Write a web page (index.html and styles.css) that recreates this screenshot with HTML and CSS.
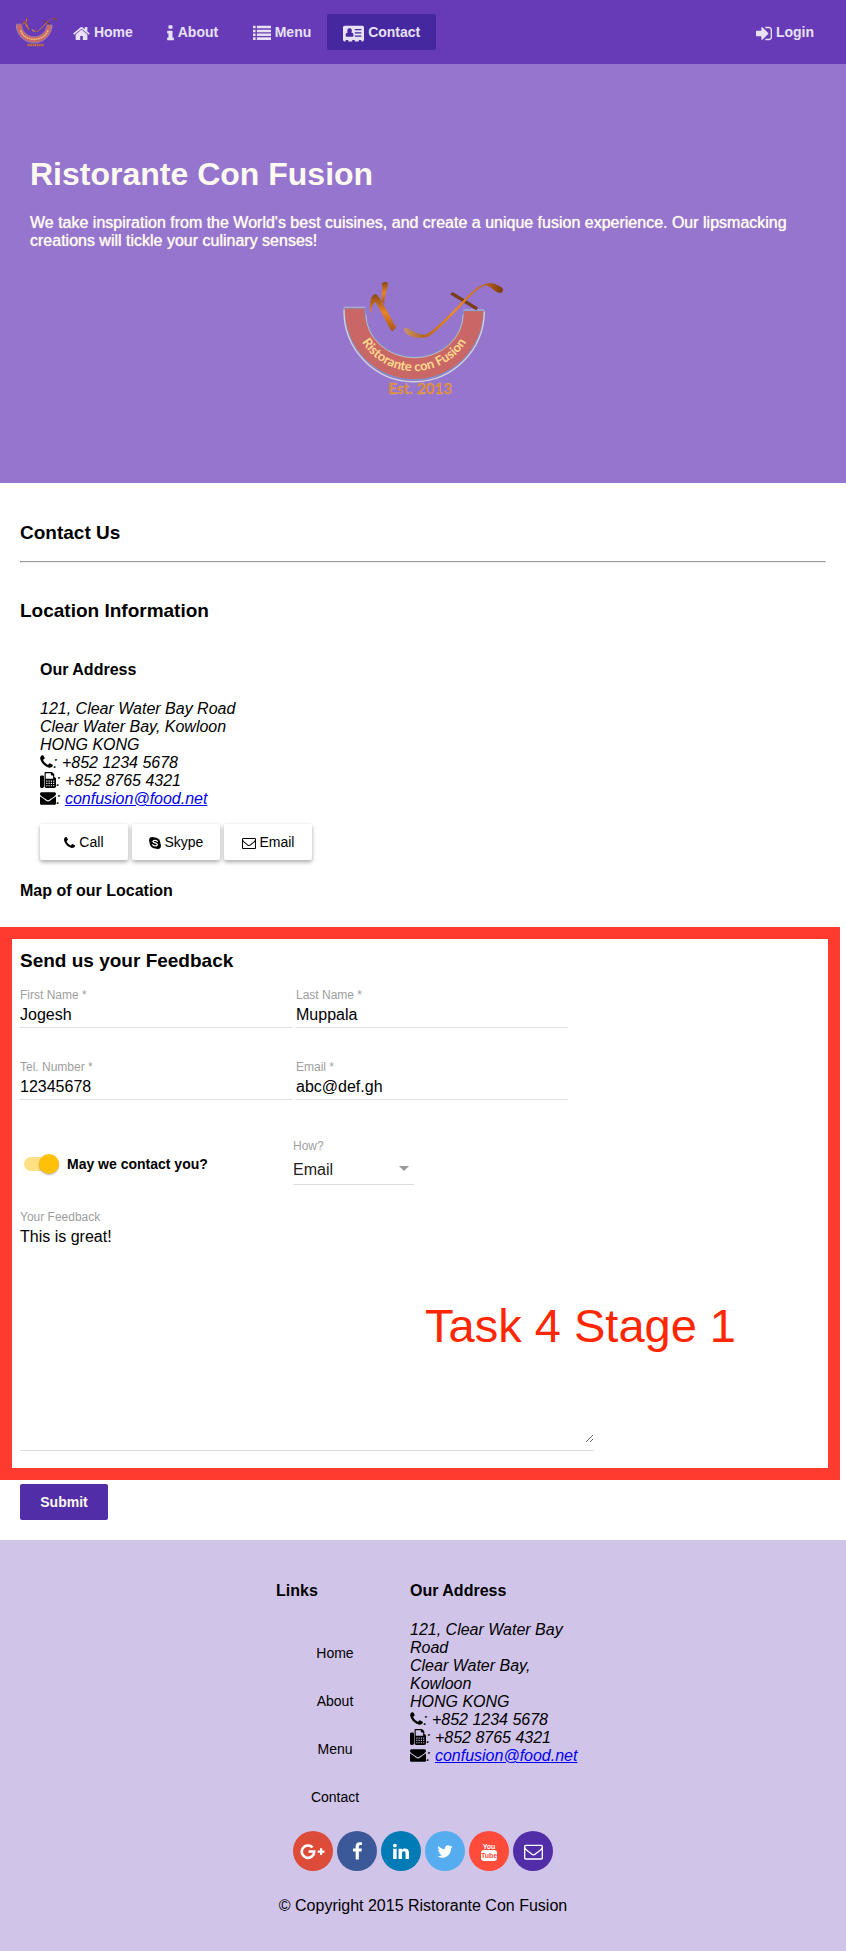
FILE: index.html
```html
<!DOCTYPE html>
<html lang="en">
<head>
<meta charset="utf-8">
<meta name="viewport" content="width=device-width, initial-scale=1">
<title>Ristorante Con Fusion: Contact Us</title>
<link rel="stylesheet" href="styles.css">
</head>
<body>
<svg class="sprite" aria-hidden="true">
  <defs>
    <linearGradient id="wood" x1="0" y1="0" x2="1" y2="0">
      <stop offset="0" stop-color="#c9976c"/><stop offset=".2" stop-color="#b5651d"/><stop offset=".5" stop-color="#ee8a2a"/><stop offset=".8" stop-color="#c4681a"/><stop offset="1" stop-color="#7a3c08"/>
    </linearGradient>
    <linearGradient id="wood-dark" x1="0" y1="0" x2="0" y2="1">
      <stop offset="0" stop-color="#8a4a10"/><stop offset=".5" stop-color="#e8842a"/><stop offset="1" stop-color="#a85512"/>
    </linearGradient>
    <path id="logo-arc" d="M95 150A185 185 0 0 0 465 150" fill="none"/>
    <g id="logo-art">
      <path d="M70 145A209 211 0 0 0 490 153H429A147 143 0 0 1 132 145Z" fill="#c96767" stroke="#6d9bd0" stroke-width="3"/>
      <path d="M69 150A210 213 0 0 0 491 156" fill="none" stroke="#d3d3dc" stroke-width="4"/>
      <path d="M68 143H133M428 151H490M135 165A146 130 0 0 0 427 165" fill="none" stroke="#d3d3dc" stroke-width="2"/>
      <path d="M147 158C145 130 150 103 164 103C178 110 200 160 226 203L214 216C198 196 180 150 163 127C155 132 151 146 150 158Z" fill="url(#wood-dark)"/>
      <path d="M183 70Q192 64 201 70C201 85 192 103 190 134L182 124C181 105 186 88 183 70Z" fill="url(#wood-dark)"/>
      <path d="M390 104L396 99L470 144L467 151Z" fill="#7d4010" stroke="#6a3408" stroke-width="2"/>
      <path d="M249 208Q254 203 263 208C276 216 292 226 312 226C340 216 390 160 440 110C465 84 490 68 512 71C526 73 538 80 546 86Q549 96 541 100C522 102 512 78 494 78C475 82 452 106 432 128C390 172 350 214 325 230C298 240 252 236 249 208Z" fill="url(#wood)"/>
    </g>
  </defs>
  <symbol id="home" viewBox="64 0 1664 1792"><path d="M1472 992v480q0 26-19 45t-45 19h-384v-384h-256v384h-384q-26 0-45-19t-19-45v-480q0-1 .5-3t.5-3l575-474 575 474q1 2 1 6zm223-69l-62 74q-8 9-21 11h-3q-13 0-21-7l-692-577-692 577q-12 8-24 7-13-2-21-11l-62-74q-8-10-7-23.5t11-21.5l719-599q32-26 76-26t76 26l244 204v-195q0-14 9-23t23-9h192q14 0 23 9t9 23v408l219 182q10 8 11 21.5t-7 23.5z"/></symbol>
  <symbol id="info" viewBox="576 0 640 1792"><path d="M1216 1344v128q0 26-19 45t-45 19h-512q-26 0-45-19t-19-45v-128q0-26 19-45t45-19h64v-384h-64q-26 0-45-19t-19-45v-128q0-26 19-45t45-19h384q26 0 45 19t19 45v576h64q26 0 45 19t19 45zm-128-1152v192q0 26-19 45t-45 19h-256q-26 0-45-19t-19-45v-192q0-26 19-45t45-19h256q26 0 45 19t19 45z"/></symbol>
  <symbol id="list" viewBox="0 0 1792 1792"><path d="M0 128h256v256H0zM0 512h256v256H0zM0 896h256v256H0zM0 1280h256v256H0zM384 128h1408v256H384zM384 512h1408v256H384zM384 896h1408v256H384zM384 1280h1408v256H384z"/></symbol>
  <symbol id="card" viewBox="0 0 2048 1792"><path fill-rule="evenodd" d="M160 128H1888Q2048 128 2048 288V1504Q2048 1664 1888 1664H1792V1568Q1792 1536 1760 1536H1568Q1536 1536 1536 1568V1664H1152V1568Q1152 1536 1120 1536H928Q896 1536 896 1568V1664H512V1568Q512 1536 480 1536H288Q256 1536 256 1568V1664H160Q0 1664 0 1504V288Q0 128 160 128ZM640 384A215 235 0 0 0 480 790Q256 800 256 1090Q256 1216 370 1216H910Q1024 1216 1024 1090Q1024 800 800 790A215 235 0 0 0 640 384ZM1152 448V576H1792V448ZM1152 768V896H1792V768ZM1152 1088V1216H1792V1088Z"/></symbol>
  <symbol id="login" viewBox="128 0 1536 1792"><path d="M1312 896q0 26-19 45l-544 544q-19 19-45 19t-45-19-19-45v-288h-448q-26 0-45-19t-19-45v-384q0-26 19-45t45-19h448v-288q0-26 19-45t45-19 45 19l544 544q19 19 19 45zm352-352v704q0 119-84.5 203.5t-203.5 84.5h-320q-13 0-22.5-9.5t-9.5-22.5q0-4-1-20t-.5-26.5 3-23.5 10-19.5 20.5-6.5h320q66 0 113-47t47-113v-704q0-66-47-113t-113-47h-312l-11.5-1-11.5-3-8-5.5-7-9-2-13.5q0-4-1-20t-.5-26.5 3-23.5 10-19.5 20.5-6.5h320q119 0 203.5 84.5t84.5 203.5z"/></symbol>
  <symbol id="phone" viewBox="192 0 1408 1792"><path d="M1600 1240q0 27-10 70.5t-21 68.5q-21 50-122 106-94 51-186 51-27 0-52.5-3.5t-57.5-12.5-47.5-14.5-55.5-20.5-49-18q-98-35-175-83-128-79-264.5-215.5t-215.5-264.5q-48-77-83-175-3-9-18-49t-20.5-55.5-14.5-47.5-12.5-57.5-3.5-52.5q0-92 51-186 56-101 106-122 25-11 68.5-21t70.5-10q14 0 21 3 18 6 53 76 11 19 30 54t35 63.5 31 53.5q3 4 17.5 25t21.5 35.5 7 28.5q0 20-28.5 50t-62 55-62 53-28.5 46q0 9 5 22.5t8.5 20.5 14 24 11.5 19q76 137 174 235t235 174q2 1 19 11.5t24 14 20.5 8.5 22.5 5q18 0 46-28.5t53-62 55-62 50-28.5q14 0 28.5 7t35.5 21.5 25 17.5q25 15 53.5 31t63.5 35 54 30q70 35 76 53 3 7 3 21z"/></symbol>
  <symbol id="fax" viewBox="0 0 1792 1792"><path fill-rule="evenodd" d="M160 384H288Q448 384 448 544V1632Q448 1792 288 1792H160Q0 1792 0 1632V544Q0 384 160 384ZM512 96Q512 0 608 0H1280Q1350 0 1400 50L1552 202Q1600 250 1600 320V560Q1792 620 1792 760V1600Q1792 1792 1600 1792H704Q512 1792 512 1600ZM640 128V768H1472V384H1312Q1216 384 1216 288V128ZM704 960V1088H832V960ZM960 960V1088H1088V960ZM1216 960V1088H1344V960ZM704 1216V1344H832V1216ZM960 1216V1344H1088V1216ZM1216 1216V1344H1344V1216ZM704 1472V1600H832V1472ZM960 1472V1600H1088V1472ZM1216 1472V1600H1344V1472ZM1472 960V1088H1600V960ZM1472 1216V1344H1600V1216ZM1472 1472V1600H1600V1472Z"/></symbol>
  <symbol id="envelope" viewBox="0 0 1792 1792"><path d="M1792 710v794q0 66-47 113t-113 47h-1472q-66 0-113-47t-47-113v-794q44 49 101 87 362 246 497 345 57 42 92.5 65.5t94.5 48 110 24.5h2q51 0 110-24.5t94.5-48 92.5-65.5q170-123 498-345 57-39 100-87zm0-294q0 79-49 151t-122 123q-376 261-468 325-10 7-42.5 31t-54 38.5-52 32.5-57.5 27-50 9h-2q-23 0-50-9t-57.5-27-52-32.5-54-38.5-42.5-31q-91-64-262-182.5t-205-142.5q-62-42-117-115.5t-55-136.5q0-78 41.5-130t118.5-52h1472q65 0 112.5 47t47.5 113z"/></symbol>
  <symbol id="envelope-o" viewBox="0 0 1792 1792"><path d="M1664 1504v-768q-32 36-69 66-268 206-426 338-51 43-83 67t-86.5 48.5-102.5 24.5h-2q-48 0-102.5-24.5t-86.5-48.5-83-67q-158-132-426-338-37-30-69-66v768q0 13 9.5 22.5t22.5 9.5h1472q13 0 22.5-9.5t9.5-22.5zm0-1051v-24.5l-.5-13-3-12.5-5.5-9-9-7.5-14-2.5h-1472q-13 0-22.5 9.5t-9.5 22.5q0 168 147 284 193 152 401 317 6 5 35 29.5t46 37.5 44.5 31.5 50.5 27.5 43 9h2q20 0 43-9t50.5-27.5 44.5-31.5 46-37.5 35-29.5q208-165 401-317 54-43 100.5-115.5t46.5-131.5zm128-37v1088q0 66-47 113t-113 47h-1472q-66 0-113-47t-47-113v-1088q0-66 47-113t113-47h1472q66 0 113 47t47 113z"/></symbol>
  <symbol id="skype" viewBox="0 0 12 14"><circle cx="6" cy="7" r="5.4"/><circle cx="3.3" cy="4.3" r="3.2"/><circle cx="8.7" cy="9.7" r="3.2"/><path d="M8.3 5.4C8 4 4 3.8 4 5.5C4 7.3 8.3 6.6 8.3 8.6C8.3 10.4 4.1 10.2 3.7 8.6" fill="none" stroke="#fff" stroke-width="1.3" stroke-linecap="round"/></symbol>
  <symbol id="facebook" viewBox="479 0 864 1792"><path d="M1343 12v264h-157q-86 0-116 36t-30 108v189h293l-39 296h-254v759h-306v-759h-255v-296h255v-218q0-186 104-288.5t277-102.5q147 0 228 12z"/></symbol>
  <symbol id="linkedin" viewBox="128 0 1536 1792"><path d="M477 625v991h-330v-991h330zm21-306q1 73-50.5 122t-135.5 49h-2q-82 0-132-49t-50-122q0-74 51.5-122.5t134.5-48.5 133 48.5 51 122.5zm1166 729v568h-329v-530q0-105-40.5-164.5t-126.5-59.5q-63 0-105.5 34.5t-63.5 85.5q-11 30-11 81v553h-329q2-399 2-647t-1-296l-1-48h329v144h-2q20-32 41-56t56.5-52 87-43.5 114.5-15.5q171 0 275 113.5t104 332.5z"/></symbol>
  <symbol id="twitter" viewBox="64 0 1664 1792"><path d="M1684 408q-67 98-162 167 1 14 1 42 0 130-38 259.5t-115.5 248.5-184.5 210.5-258 146-323 54.5q-271 0-496-145 35 4 78 4 225 0 401-138-105-2-188-64.5t-114-159.5q33 5 61 5 43 0 85-11-112-23-185.5-111.5t-73.5-205.5v-4q68 38 146 41-66-44-105-115t-39-154q0-88 44-163 121 149 294.5 238.5t371.5 99.5q-8-38-8-74 0-134 94.5-228.5t228.5-94.5q140 0 236 102 109-21 205-78-37 115-142 178 93-10 186-50z"/></symbol>
  <symbol id="google" viewBox="0 0 26 19"><path d="M12.6 5.5A6.2 6.2 0 1 0 14.2 9.5H8.5" fill="none" stroke="currentColor" stroke-width="2.6"/><path d="M20 6.2h2.2v2.300h2.300v2.200h-2.300V13H20v-2.300h-2.300V8.500H20z"/></symbol>
</svg>

<header class="toolbar">
  <svg class="brand" viewBox="66 62 484 350" role="img" aria-label="Ristorante con Fusion">
    <use href="#logo-art"/>
    <path d="M122 215Q150 315 280 325Q410 315 445 215" fill="none" stroke="#f0b878" stroke-width="18" stroke-dasharray="22 6"/>
    <path d="M200 390H398" fill="none" stroke="#c8743c" stroke-width="28" stroke-dasharray="16 6"/>
  </svg>
  <nav class="nav">
    <a class="nav-link" href="#home"><svg class="lg w17"><use href="#home"/></svg> Home</a>
    <a class="nav-link" href="#about"><svg class="lg w7"><use href="#info"/></svg> About</a>
    <a class="nav-link" href="#menu"><svg class="lg w18"><use href="#list"/></svg> Menu</a>
    <a class="nav-link active" href="#contact" aria-current="page"><svg class="lg w21"><use href="#card"/></svg> Contact</a>
  </nav>
  <a class="nav-link" href="#login"><svg class="lg w16"><use href="#login"/></svg> Login</a>
</header>

<section class="hero">
  <h1>Ristorante Con Fusion</h1>
  <p>We take inspiration from the World's best cuisines, and create a unique fusion experience. Our lipsmacking creations will tickle your culinary senses!</p>
  <svg class="hero-logo" viewBox="66 62 484 350" role="img" aria-label="Ristorante con Fusion, established 2013">
    <use href="#logo-art"/>
    <text class="logo-name" text-anchor="middle"><textPath href="#logo-arc" startOffset="50%">Ristorante con Fusion</textPath></text>
    <text class="logo-est" x="298" y="405" text-anchor="middle">Est. 2013</text>
  </svg>
</section>

<main>
  <div class="content">
    <h3>Contact Us</h3>
    <hr>
    <h3>Location Information</h3>
    <div class="location">
      <h4>Our Address</h4>
      <address>
        121, Clear Water Bay Road<br>Clear Water Bay, Kowloon<br>HONG KONG<br>
        <svg class="md w13"><use href="#phone"/></svg>: +852 1234 5678<br>
        <svg class="md w16"><use href="#fax"/></svg>: +852 8765 4321<br>
        <svg class="md w16"><use href="#envelope"/></svg>: <a href="mailto:confusion@food.net">confusion@food.net</a>
      </address>
      <div class="actions">
        <button class="raised" type="button"><svg class="sm w11"><use href="#phone"/></svg> Call</button>
        <button class="raised" type="button"><svg class="sm w12"><use href="#skype"/></svg> Skype</button>
        <button class="raised" type="button"><svg class="sm w14"><use href="#envelope-o"/></svg> Email</button>
      </div>
    </div>
    <h4 class="map-title">Map of our Location</h4>
  </div>

  <form>
    <div class="framed">
      <h3>Send us your Feedback</h3>
      <div class="row">
        <div class="field"><label for="first">First Name *</label><input id="first" type="text" value="Jogesh"></div>
        <div class="field"><label for="last">Last Name *</label><input id="last" type="text" value="Muppala"></div>
      </div>
      <div class="row">
        <div class="field"><label for="tel">Tel. Number *</label><input id="tel" type="tel" value="12345678"></div>
        <div class="field"><label for="email">Email *</label><input id="email" type="email" value="abc@def.gh"></div>
      </div>
      <div class="row contact-row">
        <label class="switch"><input type="checkbox" checked>May we contact you?</label>
        <div class="how"><label for="how">How?</label><div class="select"><select id="how"><option>Email</option><option>Tel.</option></select></div></div>
      </div>
      <div class="feedback"><label for="feedback">Your Feedback</label><textarea id="feedback">This is great!</textarea></div>
      <div class="note">Task 4 Stage 1</div>
    </div>
    <button class="submit" type="submit">Submit</button>
  </form>
</main>

<footer>
  <div class="columns">
    <div class="links">
      <h4>Links</h4>
      <ul>
        <li><a href="#home">Home</a></li>
        <li><a href="#about">About</a></li>
        <li><a href="#menu">Menu</a></li>
        <li><a href="#contact">Contact</a></li>
      </ul>
    </div>
    <div class="where">
      <h4>Our Address</h4>
      <address>
        121, Clear Water Bay Road<br>Clear Water Bay, Kowloon<br>HONG KONG<br>
        <span class="line"><svg class="md w13"><use href="#phone"/></svg>: +852 1234 5678</span>
        <span class="line"><svg class="md w16"><use href="#fax"/></svg>: +852 8765 4321</span>
        <span class="line"><svg class="md w16"><use href="#envelope"/></svg>: <a href="mailto:confusion@food.net">confusion@food.net</a></span>
      </address>
    </div>
  </div>
  <div class="social">
    <a class="google" href="#google" aria-label="Google Plus"><svg class="w26"><use href="#google"/></svg></a>
    <a class="facebook" href="#facebook" aria-label="Facebook"><svg class="w9"><use href="#facebook"/></svg></a>
    <a class="linkedin" href="#linkedin" aria-label="LinkedIn"><svg class="w16"><use href="#linkedin"/></svg></a>
    <a class="twitter" href="#twitter" aria-label="Twitter"><svg class="w16"><use href="#twitter"/></svg></a>
    <a class="youtube" href="#youtube" aria-label="YouTube"><svg class="w16" viewBox="0 0 16 19"><text class="tube" x="8" y="7" text-anchor="middle">You</text><rect y="8" width="16" height="11" rx="3"/><text class="tube tube-cut" x="8" y="16" text-anchor="middle">Tube</text></svg></a>
    <a class="mail" href="#mail" aria-label="Email"><svg class="w19"><use href="#envelope-o"/></svg></a>
  </div>
  <p class="copyright">© Copyright 2015 Ristorante Con Fusion</p>
</footer>
</body>
</html>
```
FILE: styles.css
```css
* { box-sizing: border-box; }
body {
  margin: 0;
  background: #fff;
  color: #000;
  font: 16px/18px "Liberation Sans", Arial, sans-serif;
}
h1, h3, h4, p, ul { margin: 0; padding: 0; }
h3 { font-size: 19px; line-height: 22px; }
h4 { font-size: 16px; line-height: 18px; }
button, input, select, textarea { font: inherit; color: inherit; }
svg { fill: currentColor; }
.sprite { position: absolute; width: 0; height: 0; }

/* icon sizes */
.lg { height: 19px; vertical-align: -6px; }
.md { height: 16px; vertical-align: -2px; }
.sm { height: 14px; vertical-align: -3px; }
.w7 { width: 7px; }
.w9 { width: 9px; }
.w11 { width: 11px; }
.w12 { width: 12px; }
.w13 { width: 13px; }
.w14 { width: 14px; }
.w16 { width: 16px; }
.w17 { width: 17px; }
.w18 { width: 18px; }
.w19 { width: 19px; }
.w21 { width: 21px; }
.w26 { width: 26px; }

.logo-name { font: bold 39px Lato, sans-serif; fill: #ffd98c; }
.logo-est { font: bold 46px Lato, sans-serif; fill: #e0801f; stroke: #dcb48c; stroke-width: 1px; }
.tube { font: bold 7px "Liberation Sans Narrow", "Liberation Sans", sans-serif; }
.tube-cut { fill: #ff4b3a; }

.toolbar {
  display: flex;
  align-items: center;
  height: 64px;
  padding: 0 16px;
  background: #673ab7;
}
.brand { width: 41px; height: 30px; }
.nav { display: flex; flex: 1; }
.nav-link {
  min-width: 88px;
  height: 36px;
  padding: 0 16px;
  border-radius: 2px;
  color: #e8e1f4;
  font-size: 14px;
  font-weight: bold;
  line-height: 36px;
  text-align: center;
  text-decoration: none;
  white-space: nowrap;
}
.nav-link.active { background: #4527a0; }

.hero {
  padding: 92px 30px 86px;
  background: #9575cd;
  color: #fffaf0;
}
.hero h1 { font-size: 32px; line-height: 36px; }
.hero p { margin-top: 22px; text-shadow: 0 0 1px #fffaf0; }
.hero-logo { display: block; width: 161px; height: 117px; margin: 30px auto 0; }

.content { padding: 39px 20px 27px; }
hr { margin: 17px 0 37px; }
.location { padding: 39px 20px 0; }
address { margin-top: 21px; font-style: italic; }
address a { color: #00e; }
.actions { display: flex; gap: 4px; margin-top: 16px; }
.raised, .submit {
  min-width: 88px;
  height: 36px;
  padding: 0 16px;
  border: 0;
  border-radius: 2px;
  font-size: 14px;
  line-height: 36px;
}
.raised { background: #fff; box-shadow: 0 2px 4px rgba(0, 0, 0, .35); }
.map-title { margin-top: 22px; }

.framed {
  position: relative;
  margin-right: 6px;
  padding: 11px 8px 17px;
  border: 12px solid #ff3b30;
}
.row { display: flex; gap: 4px; margin-top: 32px; }
h3 + .row { margin-top: 16px; }
.field { flex: 0 1 272px; min-width: 0; }
.field label, .how label, .feedback label {
  display: block;
  color: #9e9e9e;
  font-size: 12px;
  line-height: 14px;
}
.field input {
  display: block;
  width: 100%;
  height: 26px;
  padding: 4px 0 3px;
  border: 0;
  border-bottom: 1px solid #e0e0e0;
  background: none;
  outline: 0;
}
.contact-row { margin-top: 39px; gap: 0; }
.switch {
  display: flex;
  flex: 0 1 273px;
  align-items: center;
  gap: 8px;
  padding: 4px 0 0 4px;
  font-size: 14px;
  font-weight: bold;
}
.switch input {
  appearance: none;
  display: flex;
  justify-content: flex-end;
  width: 35px;
  height: 14px;
  margin: 0;
  border-radius: 7px;
  background: #ffe083;
}
.switch input::before {
  content: "";
  width: 20px;
  height: 20px;
  margin-top: -3px;
  border-radius: 50%;
  background: #ffc107;
  box-shadow: 0 1px 2px rgba(0, 0, 0, .3);
}
.switch input:not(:checked) { justify-content: flex-start; }
.how { width: 121px; }
.select {
  display: grid;
  align-items: center;
  height: 32px;
  border-bottom: 1px solid #dcdcdc;
}
.select::after {
  content: "";
  grid-area: 1 / 1;
  justify-self: end;
  margin-right: 5px;
  border: 5px solid transparent;
  border-top-color: #999;
  border-bottom: 0;
  pointer-events: none;
}
select {
  grid-area: 1 / 1;
  width: 100%;
  padding: 2px 0 0;
  border: 0;
  background: none;
  color: #212121;
  appearance: none;
}
.feedback {
  max-width: 574px;
  margin-top: 25px;
  padding-bottom: 7px;
  border-bottom: 1px solid #dcdcdc;
}
textarea {
  display: block;
  width: 100%;
  height: 219px;
  padding: 4px 0 0;
  border: 0;
  background: none;
  outline: 0;
}
/* annotation laid over the feedback form */
.note {
  position: absolute;
  right: 92px;
  bottom: 115px;
  color: #ff2600;
  font-size: 47px;
  line-height: 54px;
}
.submit {
  display: block;
  margin: 4px 20px 20px;
  background: #512da8;
  color: #fffaf0;
  font-weight: bold;
}

footer { padding: 42px 20px 36px; background: #d1c4e9; }
.columns { display: flex; justify-content: center; gap: 30px; }
.links { width: 104px; }
.where { width: 160px; }
.links ul { display: grid; gap: 12px; margin: 35px 0 0 14px; list-style: none; }
.links a {
  display: block;
  color: #000;
  font-size: 14px;
  line-height: 36px;
  text-align: center;
  text-decoration: none;
}
.line { display: block; white-space: nowrap; }
.social { display: flex; justify-content: center; gap: 4px; margin-top: 16px; }
.social a {
  display: flex;
  align-items: center;
  justify-content: center;
  width: 40px;
  height: 40px;
  border-radius: 50%;
  color: #fff;
}
.social svg { height: 19px; }
.google { background: #dd4b39; }
.facebook { background: #3b5998; }
.linkedin { background: #007bb6; }
.twitter { background: #55acee; }
.youtube { background: #ff4b3a; }
.mail { background: #512da8; }
.copyright { margin-top: 26px; text-align: center; }
```
